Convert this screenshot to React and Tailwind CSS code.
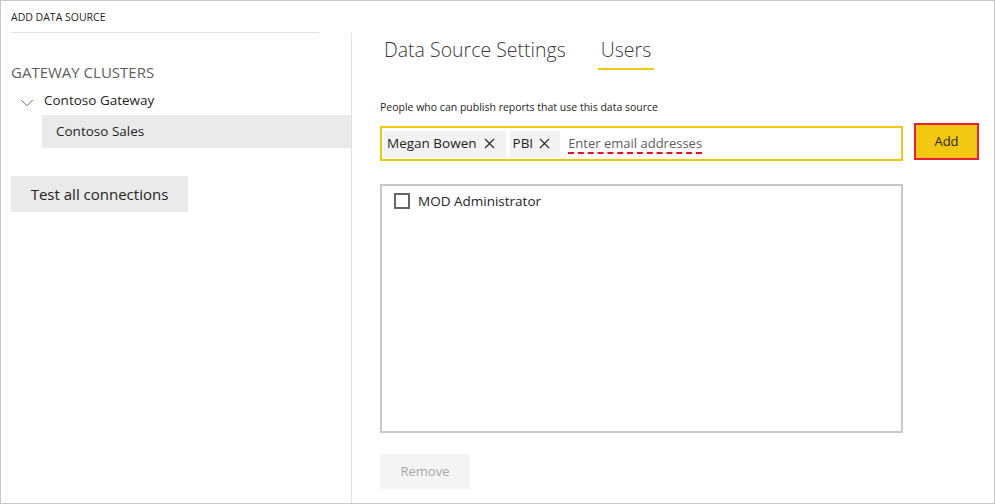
import { ChevronDown, X } from "lucide-react";

export default function App() {
    return (
        <div
            className="w-[995px] h-[504px] border border-[#c8c8c8] bg-white flex text-[#252423] overflow-hidden"
            style={{ fontFamily: '"Segoe UI", "Open Sans", sans-serif' }}
        >
            {/* LEFT PANEL */}
            <div className="w-[351px] flex flex-col shrink-0">
                <div className="h-[32px] pl-[10px]">
                    <div className="w-[308px] h-full border-b border-[#e1e1e1] pt-[9px] text-[10.5px] leading-[14px] text-[#252423]">
                        ADD DATA SOURCE
                    </div>
                </div>
                <div className="flex-1 border-r border-[#e1e1e1] flex flex-col">
                    <div className="pl-[10px] mt-[29px] text-[15px] leading-[20px] text-[#605e5c]">GATEWAY CLUSTERS</div>
                    <div className="flex items-center h-[26px] mt-[5px] pl-[15px]">
                        <ChevronDown size={22} strokeWidth={1} className="text-[#605e5c] mt-[6px]" />
                        <span className="ml-[6px] text-[13.5px]">Contoso Gateway</span>
                    </div>
                    <div className="ml-[41px] h-[33px] mt-[2px] bg-[#eaeaea] flex items-center pl-[14px] text-[13.5px]">
                        Contoso Sales
                    </div>
                    <div className="pl-[10px] mt-[28px]">
                        <button className="w-[177px] h-[36px] bg-[#eaeaea] text-[15px] text-[#252423]">
                            Test all connections
                        </button>
                    </div>
                </div>
            </div>

            {/* RIGHT PANEL */}
            <div className="flex-1 pl-[28px] flex flex-col">
                <div className="flex items-end gap-[31px] ml-[3px] mt-[35px] text-[19.5px] leading-[27px] font-light text-[#3b3a39]">
                    <div className="px-[1px] pb-[7px]">Data Source Settings</div>
                    <div className="px-[3px] pb-[5px] border-b-2 border-[#f2c811]">Users</div>
                </div>

                <div className="mt-[30px] text-[10.5px] leading-[14px] text-[#252423]">
                    People who can publish reports that use this data source
                </div>

                <div className="flex items-start mt-[12px]">
                    <div className="w-[523px] h-[35px] border-2 border-[#f2c811] flex items-center pl-[2px] gap-[4px] text-[13.5px]">
                        <div className="h-[26px] bg-[#f2f2f2] flex items-center pl-[3px] pr-[8px] gap-[4px]">
                            <span>Megan Bowen</span>
                            <X size={17} strokeWidth={1.5} />
                        </div>
                        <div className="h-[26px] bg-[#f2f2f2] flex items-center pl-[3px] pr-[7px] gap-[3px]">
                            <span>PBI</span>
                            <X size={17} strokeWidth={1.5} />
                        </div>
                        <span className="ml-[4px] text-[13px] text-[#605e5c] underline decoration-dashed decoration-[#e81123] decoration-2 underline-offset-[5px]">
                            Enter email addresses
                        </span>
                    </div>
                    <button className="ml-[11px] -mt-[3px] w-[65px] h-[37px] bg-[#f2c811] border-2 border-[#ef1d3b] text-[13px] text-[#252423]">
                        Add
                    </button>
                </div>

                <div className="mt-[23px] w-[523px] h-[249px] border-2 border-[#c8c8c8] pt-[6px] pl-[12px]">
                    <div className="flex items-center gap-[8px] h-[18px]">
                        <div className="w-[16px] h-[16px] border-2 border-[#666666]" />
                        <span className="text-[13.5px] text-[#252423]">MOD Administrator</span>
                    </div>
                </div>

                <button className="mt-[21px] w-[90px] h-[35px] bg-[#f4f4f4] text-[13px] text-[#a6a6a6]">
                    Remove
                </button>
            </div>
        </div>
    );
}
